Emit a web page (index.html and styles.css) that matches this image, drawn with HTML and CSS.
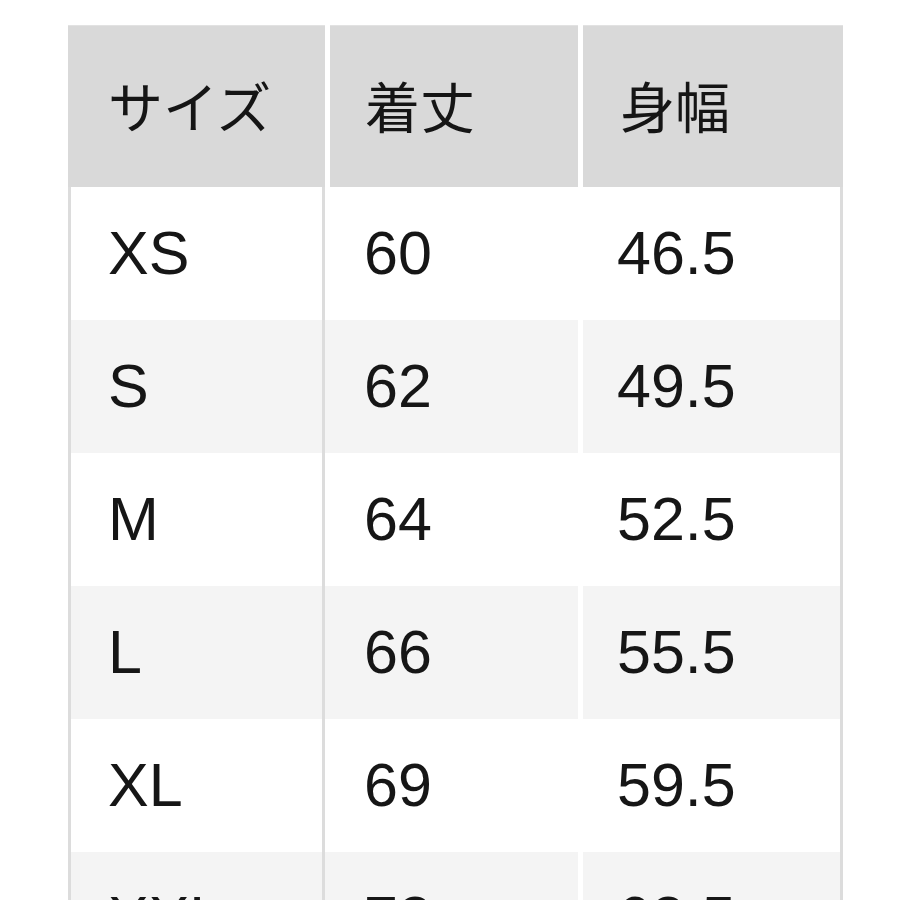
FILE: index.html
```html
<!DOCTYPE html>
<html lang="ja">
<head>
<meta charset="utf-8">
<title>サイズ表</title>
<link rel="stylesheet" href="styles.css">
</head>
<body>
<div class="size-table">
  <div class="row head">
    <div class="cell c1">サイズ</div>
    <div class="cell c2">着丈</div>
    <div class="cell c3">身幅</div>
  </div>
  <div class="row body">
    <div class="cell c1">XS</div>
    <div class="cell c2">60</div>
    <div class="cell c3">46.5</div>
  </div>
  <div class="row body alt">
    <div class="cell c1">S</div>
    <div class="cell c2">62</div>
    <div class="cell c3">49.5</div>
  </div>
  <div class="row body">
    <div class="cell c1">M</div>
    <div class="cell c2">64</div>
    <div class="cell c3">52.5</div>
  </div>
  <div class="row body alt">
    <div class="cell c1">L</div>
    <div class="cell c2">66</div>
    <div class="cell c3">55.5</div>
  </div>
  <div class="row body">
    <div class="cell c1">XL</div>
    <div class="cell c2">69</div>
    <div class="cell c3">59.5</div>
  </div>
  <div class="row body alt">
    <div class="cell c1">XXL</div>
    <div class="cell c2">72</div>
    <div class="cell c3">62.5</div>
  </div>
</div>
</body>
</html>
```

FILE: styles.css
```css
html, body {
  margin: 0;
  padding: 0;
  background: #ffffff;
}

body {
  height: 900px;
  overflow: hidden;
  font-family: "Liberation Sans", "Noto Sans CJK JP", sans-serif;
  color: #161616;
}

.size-table {
  margin: 25px 0 0 68px;
  width: 775px;
  display: flex;
  flex-direction: column;
}

.row {
  display: flex;
}

.cell {
  display: flex;
  align-items: center;
  box-sizing: border-box;
}

/* header */
.head {
  height: 162px;
  gap: 5px;
}

.head .cell {
  background: #d9d9d9;
  font-family: "Noto Sans CJK JP", sans-serif;
  font-size: 55px;
  color: #151515;
  border-top: 1px solid #e2e2e2;
  padding-bottom: 6px;
}

.head .c1 { width: 257px; padding-left: 40px; }
.head .c2 { width: 248px; padding-left: 35px; }
.head .c3 { width: 260px; padding-left: 37px; }

/* body rows */
.body {
  height: 133px;
  font-size: 61px;
}

.body .cell {
  background: #ffffff;
  padding-bottom: 2px;
}
.body.alt .cell { background: #f4f4f4; }

.body .c1 {
  width: 257px;
  padding-left: 37px;
  border-left: 3px solid #dcdcdc;
  border-right: 3px solid #dcdcdc;
}

.body .c2 {
  width: 253px;
  padding-left: 39px;
}

.body .c3 {
  width: 260px;
  margin-left: 5px;
  padding-left: 34px;
  border-right: 3px solid #dcdcdc;
}
```
